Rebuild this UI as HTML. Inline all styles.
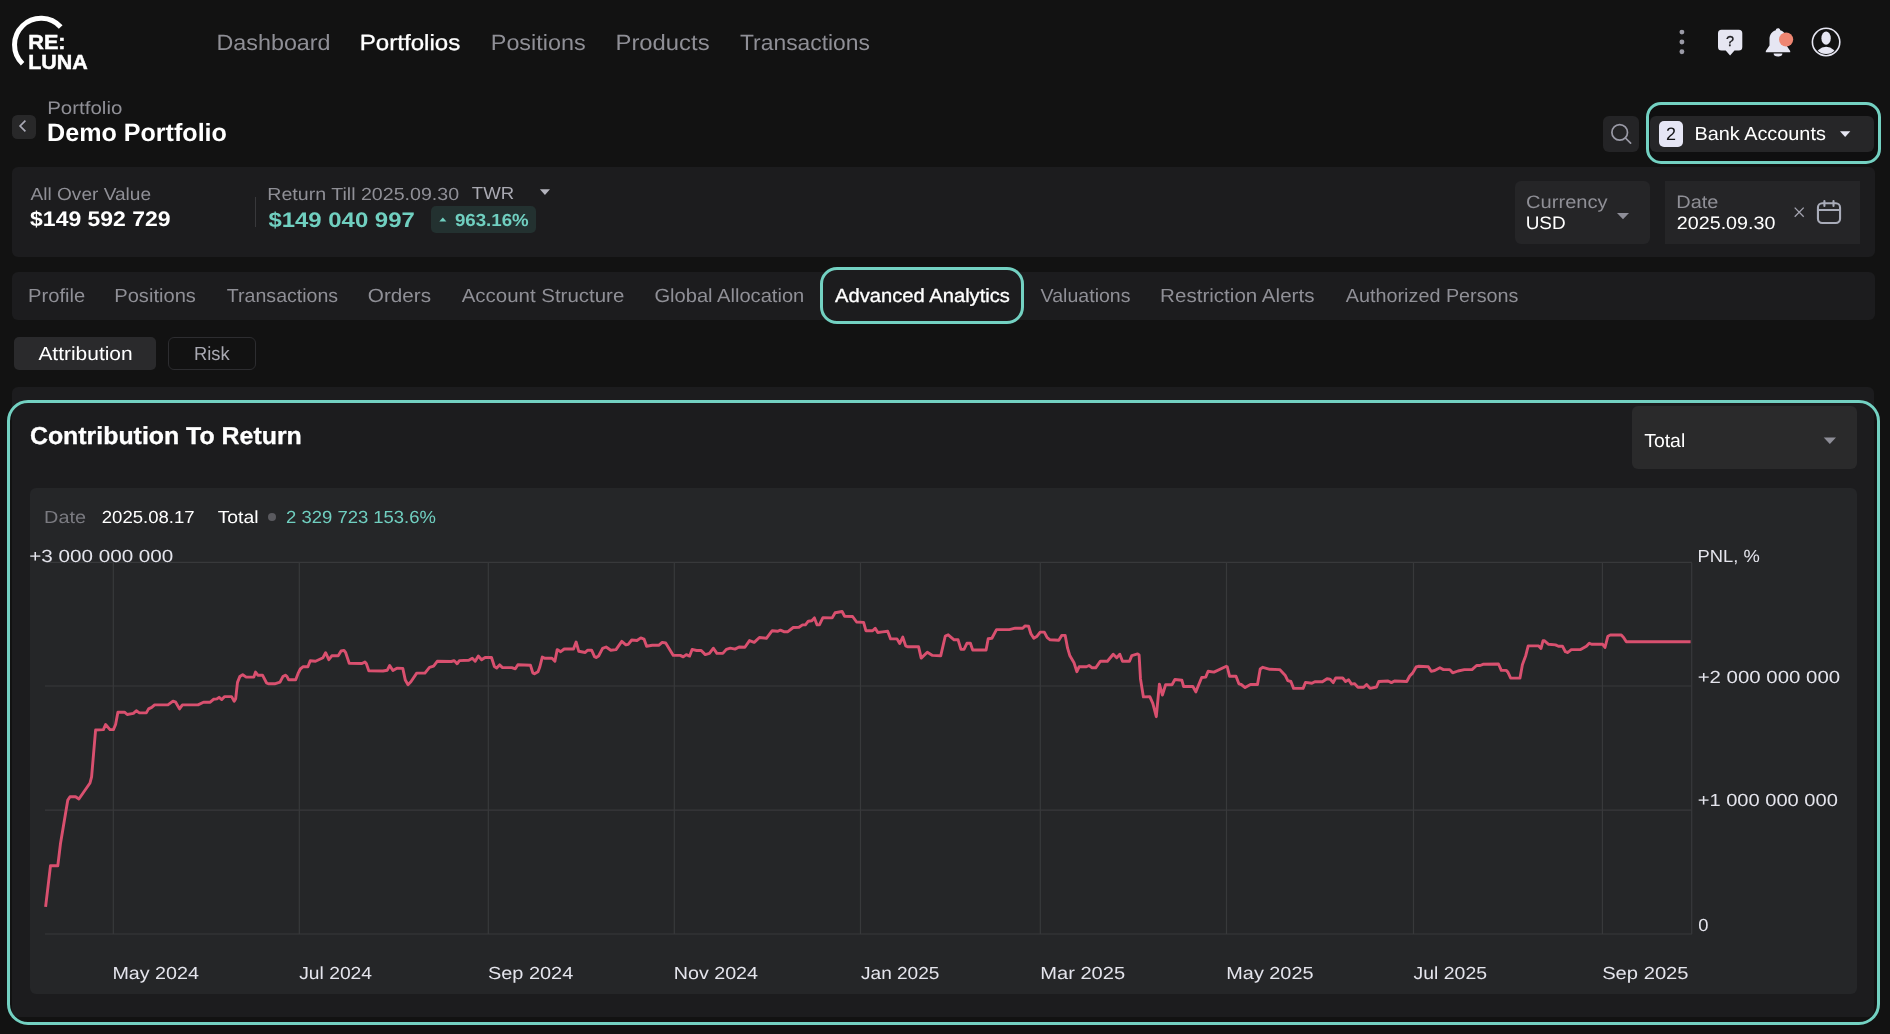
<!DOCTYPE html>
<html lang="en">
<head>
<meta charset="utf-8">
<title>Demo Portfolio - Advanced Analytics</title>
<style>
html,body{margin:0;padding:0;background:#121212;}
body{width:1890px;height:1034px;position:relative;overflow:hidden;font-family:"Liberation Sans",sans-serif;}
.abs{position:absolute;}
.t{position:absolute;left:0;top:0;line-height:1;white-space:pre;transform-origin:0 0;text-rendering:geometricPrecision;}
.box{position:absolute;box-sizing:border-box;}
</style>
</head>
<body>
<div class="abs" style="left:0;top:0;width:1890px;height:1034px;will-change:transform">
<!-- logo -->
<svg class="abs" style="left:0;top:0" width="100" height="80" viewBox="0 0 100 80">
  <path d="M22.6,63.8 A26.5,26.5 0 1 1 60.7,27.0" fill="none" stroke="#fff" stroke-width="5"/>
  <g font-family="Liberation Sans, sans-serif" font-weight="700" font-size="21" fill="#fff" stroke="#fff" stroke-width="0.5">
  <text x="28.3" y="48.5" textLength="37.2" lengthAdjust="spacingAndGlyphs">RE:</text>
  <text x="28.2" y="68.9" textLength="59.5" lengthAdjust="spacingAndGlyphs">LUNA</text>
  </g>
</svg>

<!-- header icons -->
<svg class="abs" style="left:1660px;top:15px" width="200" height="55" viewBox="1660 15 200 55">
  <g fill="#9a9aa6"><circle cx="1681.9" cy="32.1" r="2.45"/><circle cx="1681.9" cy="42" r="2.45"/><circle cx="1681.9" cy="51.8" r="2.45"/></g>
  <!-- help bubble -->
  <path d="M1721.5,29.8 h17.3 a3.5,3.5 0 0 1 3.5,3.5 v13.6 a3.5,3.5 0 0 1 -3.5,3.5 h-4.3 l-4.4,5.2 l-4.4,-5.2 h-4.2 a3.5,3.5 0 0 1 -3.5,-3.5 v-13.6 a3.5,3.5 0 0 1 3.5,-3.5 z" fill="#e6e6f2"/>
  <text x="1730" y="45.8" text-anchor="middle" font-family="Liberation Sans, sans-serif" font-weight="400" font-size="14.5" fill="#1a1a1e" stroke="#1a1a1e" stroke-width="0.3">?</text>
  <!-- bell -->
  <path d="M1778,28.2 c1.3,0 2.2,0.9 2.2,2.1 c4,1.2 6.3,4.6 6.3,9 v6.2 l3.7,5.6 v1.1 h-24.4 v-1.1 l3.7,-5.600 v-6.2 c0,-4.4 2.300,-7.800 6.300,-9 c0,-1.200 0.900,-2.100 2.200,-2.100 z" fill="#e6e6f2"/>
  <path d="M1773.600,53.600 h8.800 a4.400,3 0 0 1 -8.800,0 z" fill="#e6e6f2"/>
  <circle cx="1786.1" cy="39.5" r="7.1" fill="#ee8672"/>
  <!-- user -->
  <circle cx="1826.1" cy="42" r="13.7" fill="none" stroke="#e6e6f2" stroke-width="1.6"/>
  <clipPath id="uc"><circle cx="1826.1" cy="42" r="12.1"/></clipPath>
  <g clip-path="url(#uc)" fill="#e6e6f2">
    <ellipse cx="1826.1" cy="38.2" rx="4.7" ry="6.6"/>
    <ellipse cx="1826.1" cy="56.8" rx="10.5" ry="10"/>
  </g>
</svg>

<!-- back button -->
<div class="box" style="left:12px;top:114.800px;width:24px;height:24.300px;background:#282829;border-radius:5.500px"></div>
<svg class="abs" style="left:12px;top:115px" width="24" height="24" viewBox="0 0 24 24"><path d="M13.400,5.700 L8.100,11 L13.400,16.300" fill="none" stroke="#aaaab6" stroke-width="1.700"/></svg>

<!-- search button -->
<div class="box" style="left:1603px;top:116px;width:36px;height:35.800px;background:#242426;border-radius:6px"></div>
<svg class="abs" style="left:1603px;top:116px" width="36" height="36" viewBox="1603 116 36 36"><circle cx="1619.7" cy="132.4" r="7.800" fill="none" stroke="#9a9aa6" stroke-width="1.700"/><path d="M1625.400,138 L1630.600,143.200" stroke="#9a9aa6" stroke-width="1.700" stroke-linecap="round"/></svg>

<!-- bank accounts -->
<div class="box" style="left:1646px;top:101.700px;width:235.300px;height:62.300px;background:#0f0f10;border:3px solid #73d1c2;border-radius:15px"></div>
<div class="box" style="left:1650px;top:116px;width:224px;height:35.800px;background:#262628;border-radius:6px"></div>
<div class="box" style="left:1658.700px;top:120.900px;width:24.500px;height:26px;background:#e6e6f5;border-radius:5px"></div>
<div class="t" style="left:1658.700px;width:24.500px;top:125.300px;text-align:center;font-size:18px;color:#141416">2</div>
<svg class="abs" style="left:1838px;top:129px" width="14" height="10" viewBox="1838 129 14 10"><path d="M1840,131.300 h10.300 l-5.150,5.700 z" fill="#e6e6f2"/></svg>

<!-- summary bar -->
<div class="box" style="left:12px;top:167px;width:1862.500px;height:89.800px;background:#1c1c1e;border-radius:6px"></div>
<div class="box" style="left:254.800px;top:197px;width:1px;height:30px;background:#38383b"></div>
<svg class="abs" style="left:538px;top:187px" width="14" height="10" viewBox="538 187 14 10"><path d="M539.900,189.200 h10.100 l-5.050,5.700 z" fill="#b4b4be"/></svg>
<div class="box" style="left:430.800px;top:205.900px;width:105.300px;height:26.700px;background:#233130;border-radius:5px"></div>
<svg class="abs" style="left:438px;top:216px" width="10" height="7" viewBox="438 216 10 7"><path d="M439.300,221.400 l3.550,-3.800 l3.550,3.800 z" fill="#70cfc0"/></svg>
<div class="box" style="left:1514.900px;top:181.100px;width:135.100px;height:63px;background:#252527;border-radius:6px"></div>
<svg class="abs" style="left:1615px;top:211px" width="16" height="10" viewBox="1615 211 16 10"><path d="M1617,213 h12 l-6,6.200 z" fill="#8e8e98"/></svg>
<div class="box" style="left:1665.100px;top:181.100px;width:195px;height:63px;background:#252527"></div>
<svg class="abs" style="left:1790px;top:196px" width="56" height="32" viewBox="1790 196 56 32">
  <path d="M1794.700,207.600 l9,9.100 M1803.700,207.600 l-9,9.100" stroke="#a4a4b0" stroke-width="1.300" fill="none"/>
  <rect x="1817.950" y="203.250" width="22.100" height="19.800" rx="4.200" fill="none" stroke="#a9acb9" stroke-width="2.100"/>
  <path d="M1817.950,210 h22.100 M1824.400,201 v5 M1833.500,201 v5" stroke="#a9acb9" stroke-width="2.100" fill="none" stroke-linecap="round"/>
</svg>

<!-- tabs bar -->
<div class="box" style="left:12px;top:272.200px;width:1862.500px;height:47.700px;background:#1c1c1e;border-radius:6px"></div>
<div class="box" style="left:820px;top:266.600px;width:204.200px;height:57.800px;background:#1c1c1e;border:3px solid #73d1c2;border-radius:17px"></div>

<!-- sub tabs -->
<div class="box" style="left:14px;top:337px;width:142px;height:33px;background:#2a2a2c;border-radius:5px"></div>
<div class="box" style="left:168px;top:337px;width:87.700px;height:33px;border:1.800px solid #2d2d30;border-radius:6px"></div>

<!-- card -->
<div class="box" style="left:12px;top:387px;width:1862px;height:630px;background:#1c1c1e;border-radius:6px"></div>
<div class="box" style="left:7.200px;top:399.600px;width:1873.200px;height:625.200px;border:3px solid #73d1c2;border-radius:21px"></div>
<div class="box" style="left:1632px;top:406.100px;width:225.300px;height:62.900px;background:#2a2a2b;border-radius:6px"></div>
<svg class="abs" style="left:1821px;top:435px" width="18" height="12" viewBox="1821 435 18 12"><path d="M1823.700,437.600 h12.300 l-6.150,6.300 z" fill="#8e8e98"/></svg>
<div class="box" style="left:30px;top:488px;width:1827.200px;height:506px;background:#252628;border-radius:6px"></div>
<div class="box" style="left:268.300px;top:513.400px;width:8px;height:8px;border-radius:50%;background:#5a5a5f"></div>

<svg class="abs" style="left:0;top:0" width="1890" height="1034" viewBox="0 0 1890 1034">
<g stroke="#38393b" stroke-width="1.2" fill="none"><line x1="45" x2="1692" y1="562.4" y2="562.4"/><line x1="45" x2="1692" y1="686.0" y2="686.0"/><line x1="45" x2="1692" y1="810.2" y2="810.2"/><line x1="45" x2="1692" y1="934.0" y2="934.0"/><line x1="113.3" x2="113.3" y1="562.4" y2="934"/><line x1="299.3" x2="299.3" y1="562.4" y2="934"/><line x1="488.3" x2="488.3" y1="562.4" y2="934"/><line x1="674.3" x2="674.3" y1="562.4" y2="934"/><line x1="860.5" x2="860.5" y1="562.4" y2="934"/><line x1="1040.3" x2="1040.3" y1="562.4" y2="934"/><line x1="1226.5" x2="1226.5" y1="562.4" y2="934"/><line x1="1413.5" x2="1413.5" y1="562.4" y2="934"/><line x1="1602.4" x2="1602.4" y1="562.4" y2="934"/><line x1="1691.7" x2="1691.7" y1="562.4" y2="934"/></g>
<path d="M45.6,906.9 L50.5,865.7 L57.8,865.7 L60.5,843.5 L67.8,800.1 L70.0,796.8 L75.6,796.8 L78.9,799.0 L90.0,783.0 L91.6,776.8 L95.6,730.0 L103.4,729.6 L105.6,724.5 L110.0,729.6 L113.4,729.6 L115.6,724.5 L117.9,712.2 L124.5,712.2 L127.2,714.5 L133.4,713.4 L136.3,710.7 L139.4,712.9 L146.3,712.9 L148.6,708.9 L151.7,707.4 L154.6,704.9 L167.9,704.9 L173.0,701.1 L175.7,702.2 L179.5,708.9 L182.4,704.9 L198.0,704.9 L203.5,702.2 L210.2,702.2 L213.5,699.3 L216.9,698.9 L219.1,697.3 L221.8,699.6 L224.7,696.6 L231.6,696.6 L234.2,701.2 L235.7,698.7 L237.5,682.4 L239.8,676.6 L242.7,674.8 L246.2,677.1 L253.8,677.1 L255.5,672.1 L257.8,675.2 L262.5,675.2 L266.6,683.0 L268.3,683.8 L274.7,683.8 L280.0,682.2 L282.9,676.6 L285.4,675.2 L286.9,676.3 L288.7,679.8 L295.7,679.8 L298.0,673.7 L300.3,669.0 L303.2,666.7 L307.9,666.7 L310.2,660.8 L315.5,661.2 L323.0,657.7 L325.6,652.7 L328.8,659.7 L331.8,655.8 L338.2,655.8 L341.1,651.0 L344.0,650.4 L345.7,652.7 L349.2,663.2 L362.0,663.5 L364.9,662.0 L366.4,663.8 L368.8,670.7 L383.0,671.0 L387.3,670.2 L389.7,665.5 L392.9,670.5 L396.9,668.2 L402.8,668.4 L405.3,680.1 L408.0,684.7 L410.9,681.8 L416.7,673.1 L424.9,673.1 L429.5,667.3 L433.6,666.1 L437.2,661.3 L451.3,661.5 L454.2,660.6 L457.1,663.8 L459.4,660.6 L468.8,660.3 L472.3,658.3 L475.2,661.2 L478.3,656.0 L481.6,659.8 L485.1,657.5 L491.5,657.5 L494.4,666.5 L496.7,668.0 L499.6,664.9 L502.5,667.6 L511.8,667.6 L515.3,668.8 L517.9,664.7 L530.5,665.3 L532.8,672.9 L534.5,673.8 L538.0,671.7 L539.8,667.0 L542.3,657.1 L545.0,658.3 L552.0,658.3 L554.9,661.2 L557.2,649.6 L560.7,651.7 L564.2,649.0 L573.5,649.0 L576.1,642.0 L578.8,651.3 L585.2,652.5 L587.5,650.2 L591.6,650.2 L594.5,656.6 L596.2,657.5 L598.6,656.0 L602.6,648.4 L606.1,647.0 L610.8,650.2 L616.0,649.6 L621.8,641.4 L625.9,644.9 L628.2,644.3 L631.7,640.0 L637.0,640.5 L640.8,637.9 L644.0,639.1 L646.6,646.3 L652.3,645.3 L658.7,645.3 L662.2,642.4 L665.7,643.0 L673.3,655.4 L680.3,655.4 L683.2,656.9 L686.3,654.6 L689.6,656.1 L692.1,649.4 L696.6,650.5 L701.2,650.5 L705.3,654.6 L709.4,653.4 L713.4,648.2 L716.9,653.4 L722.8,653.4 L726.3,649.4 L730.3,648.2 L735.0,649.1 L739.1,647.0 L744.9,647.3 L749.5,640.6 L754.2,642.4 L759.4,637.5 L766.4,638.3 L772.2,630.7 L777.5,631.3 L780.4,630.2 L783.9,631.7 L787.9,631.7 L793.2,627.5 L799.0,627.3 L802.5,624.9 L805.4,624.9 L808.3,621.2 L811.8,620.8 L814.4,617.9 L817.1,624.9 L819.4,624.9 L822.9,617.7 L832.2,617.9 L835.1,612.7 L842.1,611.5 L844.6,616.2 L852.6,616.5 L856.6,622.0 L863.6,622.4 L865.9,630.7 L872.6,630.7 L875.2,628.2 L877.8,632.5 L882.5,631.9 L887.7,631.3 L890.6,638.9 L897.0,638.9 L899.7,643.6 L902.8,637.1 L905.7,645.9 L907.5,646.8 L918.6,646.8 L921.2,658.1 L927.3,652.3 L932.5,655.4 L940.7,655.8 L945.3,636.0 L948.2,634.8 L954.1,639.8 L958.1,639.8 L961.0,649.4 L964.0,649.4 L966.9,643.3 L970.4,643.3 L972.7,650.0 L986.1,650.0 L988.2,638.7 L991.9,638.3 L996.5,629.6 L1009.4,629.6 L1015.2,628.2 L1022.7,628.2 L1025.1,625.9 L1028.6,626.3 L1030.9,633.7 L1033.8,638.3 L1036.7,636.6 L1040.2,632.1 L1044.3,632.1 L1047.2,637.7 L1050.1,639.8 L1058.8,640.3 L1061.7,635.4 L1065.2,635.4 L1067.6,648.2 L1069.9,655.8 L1074.0,662.8 L1076.9,671.7 L1079.2,666.6 L1086.4,666.7 L1089.1,665.5 L1092.2,667.8 L1095.7,667.8 L1100.4,661.2 L1107.4,661.2 L1113.2,654.2 L1116.7,657.7 L1119.8,654.2 L1122.5,661.2 L1129.5,661.2 L1131.8,655.6 L1137.6,653.9 L1139.1,655.0 L1140.5,678.9 L1143.4,696.9 L1149.8,696.6 L1152.8,703.3 L1156.3,716.7 L1159.4,684.1 L1162.4,695.0 L1165.6,684.7 L1172.0,684.7 L1174.9,679.5 L1181.9,680.3 L1183.6,686.5 L1192.9,686.5 L1195.8,691.9 L1198.7,684.7 L1201.7,677.5 L1205.7,677.1 L1208.1,671.3 L1213.9,672.1 L1226.4,666.3 L1227.3,667.0 L1229.6,676.3 L1236.0,676.3 L1238.9,683.8 L1241.2,684.5 L1245.1,687.6 L1250.5,684.5 L1257.5,684.5 L1260.2,669.0 L1262.8,667.3 L1269.8,669.3 L1279.7,669.6 L1285.1,675.2 L1287.8,680.6 L1290.9,681.5 L1293.6,688.4 L1303.1,688.4 L1305.5,682.4 L1311.9,683.3 L1314.8,681.8 L1322.4,681.8 L1327.0,678.7 L1329.9,679.1 L1333.2,682.6 L1335.7,678.0 L1342.7,678.0 L1345.6,681.5 L1348.6,679.8 L1351.5,684.1 L1354.4,683.6 L1357.9,687.3 L1363.7,687.3 L1366.6,684.5 L1370.1,688.4 L1376.5,687.0 L1378.8,681.5 L1388.1,681.0 L1391.4,682.6 L1394.5,681.0 L1406.8,681.5 L1409.7,676.0 L1412.6,673.1 L1416.1,667.0 L1418.4,666.3 L1428.3,666.7 L1431.2,671.3 L1434.7,670.5 L1439.9,667.8 L1443.4,669.6 L1449.8,669.6 L1452.7,672.8 L1458.0,671.0 L1464.4,669.6 L1472.0,669.6 L1476.6,665.5 L1480.1,665.5 L1483.0,664.3 L1498.5,664.0 L1501.3,670.3 L1506.2,670.4 L1507.9,672.1 L1510.6,678.0 L1520.0,678.1 L1522.4,664.7 L1525.8,655.4 L1528.2,645.9 L1538.7,645.9 L1541.0,648.4 L1543.0,640.8 L1544.5,640.8 L1548.6,644.3 L1555.5,644.9 L1558.4,646.3 L1562.5,646.3 L1565.4,651.7 L1567.8,652.5 L1571.3,649.6 L1580.6,649.6 L1586.4,646.3 L1589.3,643.2 L1591.6,644.3 L1602.7,644.3 L1605.0,647.5 L1607.9,636.2 L1610.3,635.0 L1621.3,635.0 L1623.6,637.4 L1626.3,641.7 L1690.6,641.7" fill="none" stroke="#d9506f" stroke-width="2.9" stroke-linejoin="round" stroke-linecap="butt"/>
</svg>
<div class="t" style="font-size:22px;font-weight:400;color:#8f8f96;transform:translate(216.49px,32.00px) scaleX(1.0600);">Dashboard</div>
<div class="t" style="font-size:22px;font-weight:400;color:#ffffff;transform:translate(359.77px,32.00px) scaleX(1.0949);-webkit-text-stroke:0.32px #ffffff;">Portfolios</div>
<div class="t" style="font-size:22px;font-weight:400;color:#8f8f96;transform:translate(490.79px,32.00px) scaleX(1.0622);">Positions</div>
<div class="t" style="font-size:22px;font-weight:400;color:#8f8f96;transform:translate(615.48px,32.00px) scaleX(1.0836);">Products</div>
<div class="t" style="font-size:22px;font-weight:400;color:#8f8f96;transform:translate(740.01px,32.00px) scaleX(1.0385);">Transactions</div>
<div class="t" style="font-size:18px;font-weight:400;color:#8f8f96;transform:translate(47.15px,99.00px) scaleX(1.1390);">Portfolio</div>
<div class="t" style="font-size:25px;font-weight:700;color:#ffffff;transform:translate(47.04px,120.80px) scaleX(1.0040);">Demo Portfolio</div>
<div class="t" style="font-size:19px;font-weight:400;color:#ffffff;transform:translate(1694.48px,124.90px) scaleX(1.0452);">Bank Accounts</div>
<div class="t" style="font-size:17.5px;font-weight:400;color:#8f8f96;transform:translate(30.53px,186.10px) scaleX(1.0899);">All Over Value</div>
<div class="t" style="font-size:21px;font-weight:700;color:#ffffff;transform:translate(30.10px,208.70px) scaleX(1.0933);">$149 592 729</div>
<div class="t" style="font-size:17.5px;font-weight:400;color:#8f8f96;transform:translate(267.30px,186.00px) scaleX(1.1198);">Return Till 2025.09.30</div>
<div class="t" style="font-size:17.5px;font-weight:400;color:#a9a9b2;transform:translate(471.86px,185.30px) scaleX(1.0606);">TWR</div>
<div class="t" style="font-size:21px;font-weight:700;color:#70cfc0;transform:translate(268.43px,209.70px) scaleX(1.1389);">$149 040 997</div>
<div class="t" style="font-size:17.5px;font-weight:700;color:#70cfc0;transform:translate(454.91px,211.50px) scaleX(1.0686);">963.16%</div>
<div class="t" style="font-size:18px;font-weight:400;color:#8f8f96;transform:translate(1526.10px,192.90px) scaleX(1.1169);">Currency</div>
<div class="t" style="font-size:18px;font-weight:400;color:#ffffff;transform:translate(1525.69px,214.00px) scaleX(1.0526);">USD</div>
<div class="t" style="font-size:18px;font-weight:400;color:#8f8f96;transform:translate(1676.32px,192.90px) scaleX(1.1077);">Date</div>
<div class="t" style="font-size:18px;font-weight:400;color:#ffffff;transform:translate(1676.83px,214.30px) scaleX(1.0942);">2025.09.30</div>
<div class="t" style="font-size:19px;font-weight:400;color:#8f8f96;transform:translate(28.04px,287.00px) scaleX(1.0619);">Profile</div>
<div class="t" style="font-size:19px;font-weight:400;color:#8f8f96;transform:translate(114.25px,287.00px) scaleX(1.0596);">Positions</div>
<div class="t" style="font-size:19px;font-weight:400;color:#8f8f96;transform:translate(226.82px,287.00px) scaleX(1.0302);">Transactions</div>
<div class="t" style="font-size:19px;font-weight:400;color:#8f8f96;transform:translate(367.83px,287.00px) scaleX(1.0888);">Orders</div>
<div class="t" style="font-size:19px;font-weight:400;color:#8f8f96;transform:translate(461.64px,287.00px) scaleX(1.0771);">Account Structure</div>
<div class="t" style="font-size:19px;font-weight:400;color:#8f8f96;transform:translate(654.39px,287.00px) scaleX(1.0592);">Global Allocation</div>
<div class="t" style="font-size:19px;font-weight:400;color:#ffffff;transform:translate(835.01px,287.00px) scaleX(1.0618);-webkit-text-stroke:0.32px #ffffff;">Advanced Analytics</div>
<div class="t" style="font-size:19px;font-weight:400;color:#8f8f96;transform:translate(1040.62px,287.00px) scaleX(1.0295);">Valuations</div>
<div class="t" style="font-size:19px;font-weight:400;color:#8f8f96;transform:translate(1160.12px,287.00px) scaleX(1.0826);">Restriction Alerts</div>
<div class="t" style="font-size:19px;font-weight:400;color:#8f8f96;transform:translate(1345.78px,287.00px) scaleX(1.0416);">Authorized Persons</div>
<div class="t" style="font-size:19px;font-weight:400;color:#ffffff;transform:translate(38.40px,345.30px) scaleX(1.1013);">Attribution</div>
<div class="t" style="font-size:19px;font-weight:400;color:#a9a9b2;transform:translate(194.01px,345.30px) scaleX(0.9654);">Risk</div>
<div class="t" style="font-size:24.5px;font-weight:700;color:#ffffff;transform:translate(29.95px,425.20px) scaleX(1.0157);-webkit-text-stroke:0.3px #ffffff;">Contribution To Return</div>
<div class="t" style="font-size:19px;font-weight:400;color:#ffffff;transform:translate(1644.19px,432.10px) scaleX(1.0228);">Total</div>
<div class="t" style="font-size:17.5px;font-weight:400;color:#7a7a80;transform:translate(44.12px,509.00px) scaleX(1.1340);">Date</div>
<div class="t" style="font-size:17.5px;font-weight:400;color:#ffffff;transform:translate(101.73px,509.00px) scaleX(1.0613);">2025.08.17</div>
<div class="t" style="font-size:17.5px;font-weight:400;color:#ffffff;transform:translate(217.65px,509.00px) scaleX(1.1065);">Total</div>
<div class="t" style="font-size:17.5px;font-weight:400;color:#70cfc0;transform:translate(286.11px,509.00px) scaleX(1.0542);">2 329 723 153.6%</div>
<div class="t" style="font-size:17.5px;font-weight:400;color:#e4e4ec;transform:translate(29.24px,547.60px) scaleX(1.1796);">+3 000 000 000</div>
<div class="t" style="font-size:17.5px;font-weight:400;color:#e4e4ec;transform:translate(1697.58px,548.20px) scaleX(1.0477);">PNL, %</div>
<div class="t" style="font-size:17.5px;font-weight:400;color:#e4e4ec;transform:translate(1697.63px,668.70px) scaleX(1.1673);">+2 000 000 000</div>
<div class="t" style="font-size:17.5px;font-weight:400;color:#e4e4ec;transform:translate(1697.70px,791.50px) scaleX(1.1478);">+1 000 000 000</div>
<div class="t" style="font-size:17.5px;font-weight:400;color:#e4e4ec;transform:translate(1698.22px,916.80px) scaleX(1.0493);">0</div>
<div class="t" style="font-size:17.5px;font-weight:400;color:#e4e4ec;transform:translate(112.42px,965.20px) scaleX(1.1247);">May 2024</div>
<div class="t" style="font-size:17.5px;font-weight:400;color:#e4e4ec;transform:translate(299.23px,965.20px) scaleX(1.1000);">Jul 2024</div>
<div class="t" style="font-size:17.5px;font-weight:400;color:#e4e4ec;transform:translate(487.93px,965.20px) scaleX(1.1382);">Sep 2024</div>
<div class="t" style="font-size:17.5px;font-weight:400;color:#e4e4ec;transform:translate(673.74px,965.20px) scaleX(1.1249);">Nov 2024</div>
<div class="t" style="font-size:17.5px;font-weight:400;color:#e4e4ec;transform:translate(861.02px,965.20px) scaleX(1.0884);">Jan 2025</div>
<div class="t" style="font-size:17.5px;font-weight:400;color:#e4e4ec;transform:translate(1040.24px,965.20px) scaleX(1.1472);">Mar 2025</div>
<div class="t" style="font-size:17.5px;font-weight:400;color:#e4e4ec;transform:translate(1226.35px,965.20px) scaleX(1.1334);">May 2025</div>
<div class="t" style="font-size:17.5px;font-weight:400;color:#e4e4ec;transform:translate(1413.61px,965.20px) scaleX(1.1092);">Jul 2025</div>
<div class="t" style="font-size:17.5px;font-weight:400;color:#e4e4ec;transform:translate(1602.15px,965.20px) scaleX(1.1534);">Sep 2025</div>
</div>
</body>
</html>
